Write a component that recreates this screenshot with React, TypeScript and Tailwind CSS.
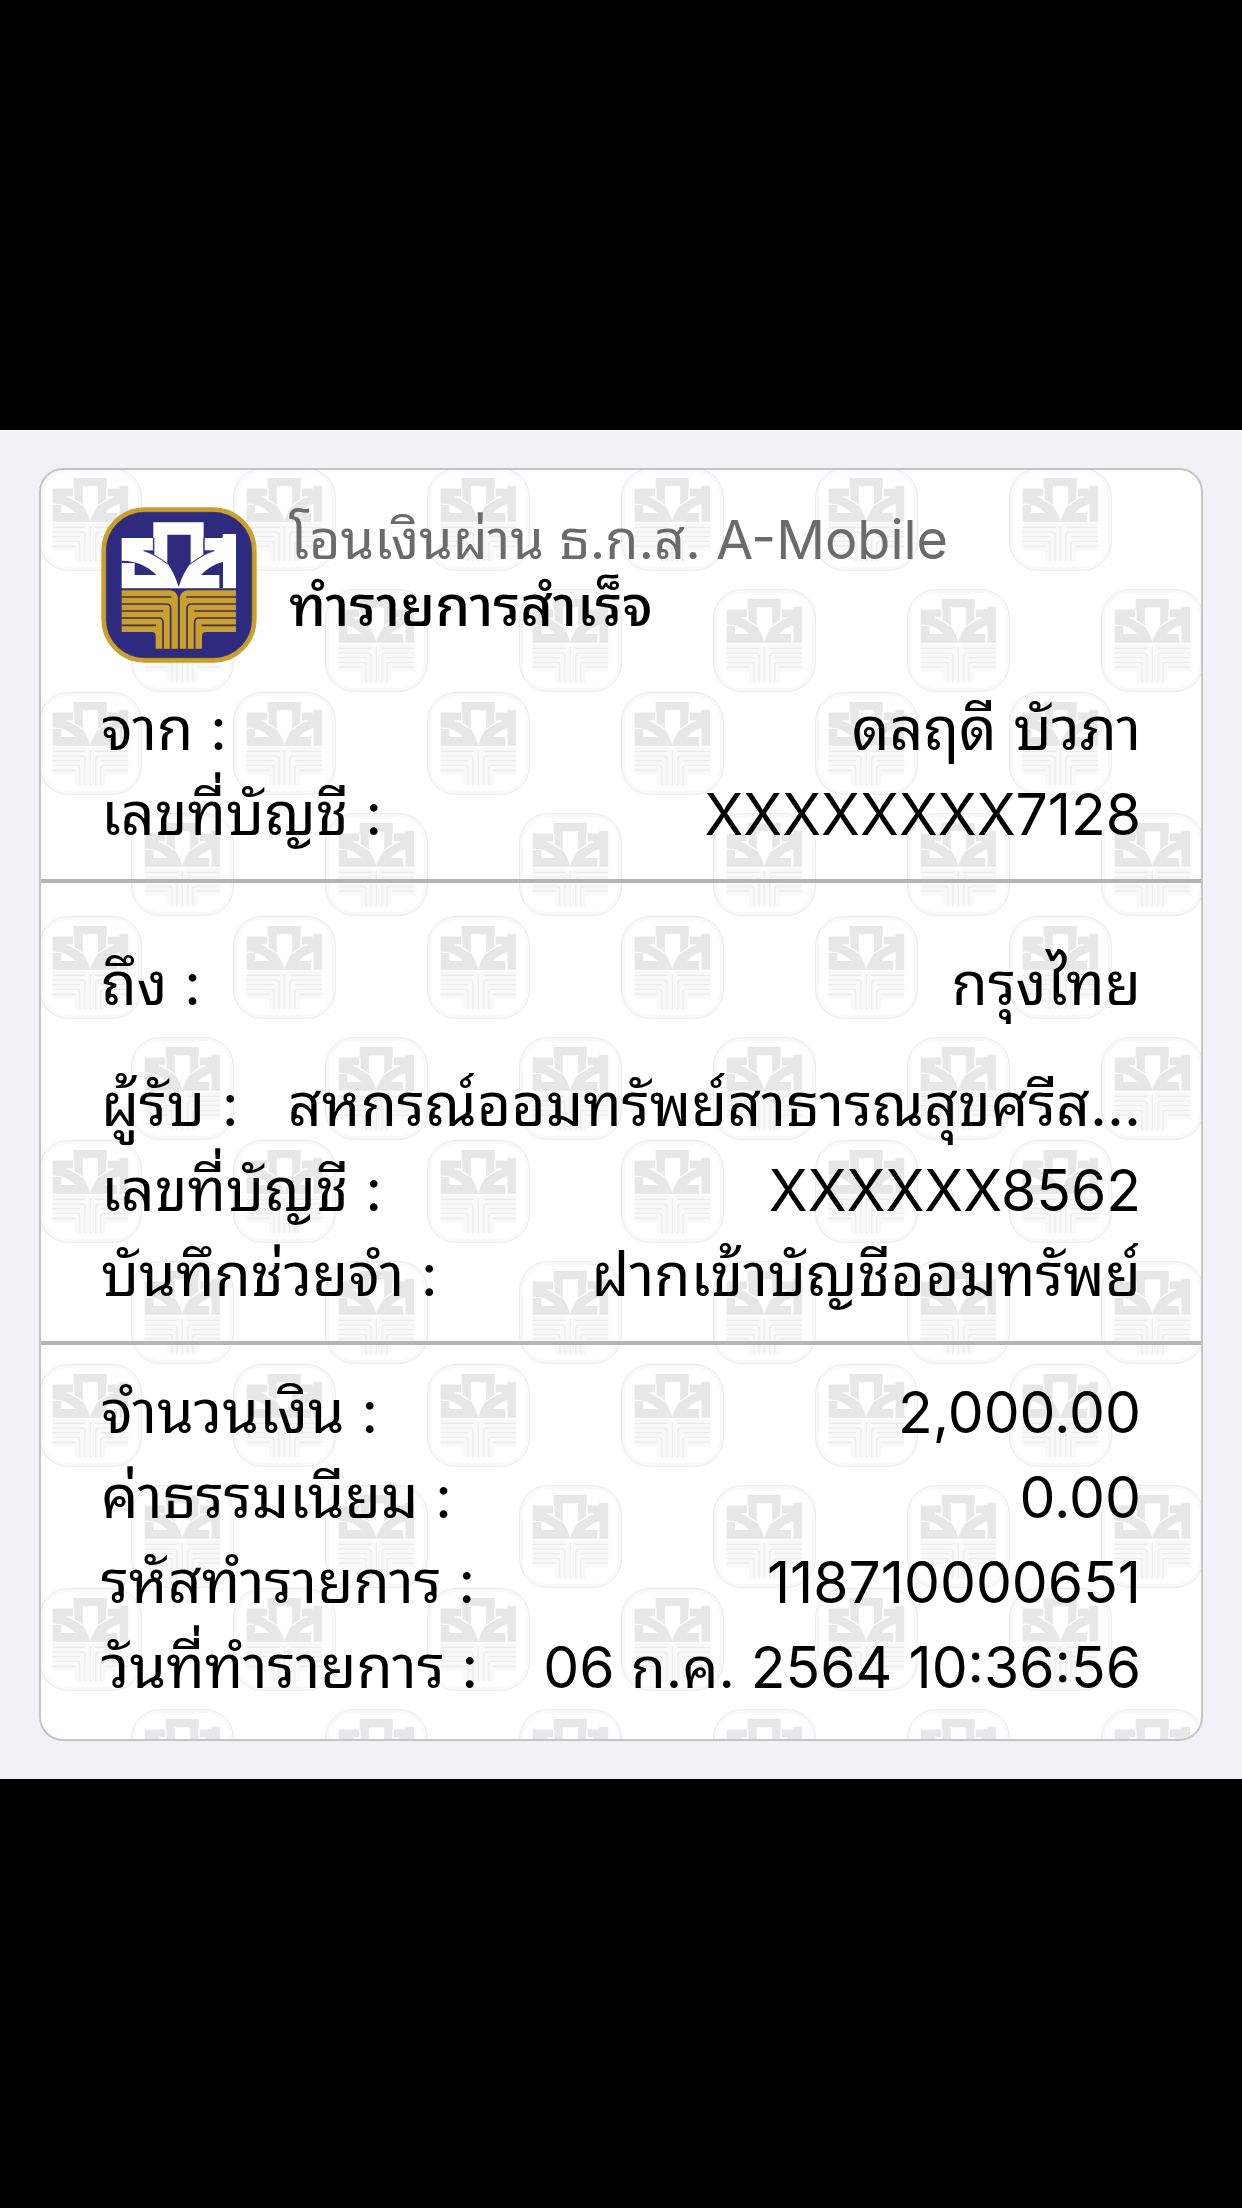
import React from 'react';

interface LogoProps {
  muted?: boolean;
}

interface RowProps {
  label: string;
  value: string;
  numeric?: boolean;
}

const LogoMark: React.FC<LogoProps> = ({ muted = false }) => {
  const ring = muted ? '#fafafa' : '#c9a02e';
  const field = muted ? '#ffffff' : '#2e2b7e';
  const letters = muted ? '#e7e7e7' : '#ffffff';
  const book = muted ? '#f9f9f9' : '#c9a02e';
  const lines = muted ? '#ebebeb' : '#3d3052';
  const gap = muted ? 5 : 2;

  const bookSide = (
    <>
      <path d="M124 297H270Q288 299 293 318V472H226V434Q226 422 214 422H124Z" fill={book} />
      <g fill="none" stroke={lines} strokeWidth="5">
        <path d="M124 317H273" />
        <path d="M124 338H258Q271 338 271 352V472" />
        <path d="M124 359H249" />
        <path d="M124 380H236Q248 380 248 394V472" />
        <path d="M124 402H227" />
      </g>
    </>
  );

  return (
    <g>
      <rect x="65" y="50" width="462" height="462" rx="128" fill={ring} stroke={muted ? '#e6e6e6' : ring} strokeWidth="4" />
      <rect x="78" y="63" width="436" height="436" rx="114" fill={field} stroke={muted ? '#f2f2f2' : field} strokeWidth="2" />
      {/* Letters */}
      <path d="M124 140H219V93H370V140H427V128H467V291H124Z" fill={letters} />
      <path d="M261 130H331V216Q308 245 295 287Q282 245 261 216Z" fill={field} />
      <path d="M190 178H219V140H221V192Q245 203 262 218Q228 190 190 178Z" fill={field} stroke={field} strokeWidth={gap} />
      <path d="M402 178H372V140H370V192Q347 203 330 218Q363 190 402 178Z" fill={field} stroke={field} strokeWidth={gap} />
      <path d="M124 208Q186 208 228 251H163V215H124Z" fill={field} />
      <path d="M428 211Q388 222 362 251H417V291H428Z" fill={field} />
      {/* Open book */}
      {bookSide}
      <g transform="translate(591 0) scale(-1 1)">{bookSide}</g>
      <path d="M295 310V472" stroke={lines} strokeWidth="5" />
    </g>
  );
};

const Watermark = () => (
  <svg className="pointer-events-none absolute inset-0 h-full w-full" aria-hidden="true">
    <defs>
      <symbol id="mark" viewBox="62 47 468 468">
        <LogoMark muted />
      </symbol>
      <pattern id="marks" x="-2" y="-2" width="194" height="224" patternUnits="userSpaceOnUse">
        <use href="#mark" x="0" y="0" width="103" height="103" />
        <use href="#mark" x="92" y="121" width="103" height="103" />
        <use href="#mark" x="-102" y="121" width="103" height="103" />
      </pattern>
    </defs>
    <rect width="100%" height="100%" fill="url(#marks)" />
  </svg>
);

const Row: React.FC<RowProps> = ({ label, value, numeric = false }) => (
  <div className="flex h-[85px] items-baseline justify-between leading-[85px] whitespace-nowrap">
    <dt>{label}</dt>
    <dd className={numeric ? 'text-[57px]' : ''}>{value}</dd>
  </div>
);

const App = () => {
  return (
    <main className="flex min-h-screen items-center bg-black font-['Inter','Noto_Sans_Thai_Looped','Noto_Sans_Thai',sans-serif] text-[59px] text-black">
      <div className="w-full bg-[#f2f1f8] px-[39px] py-[38px]">
        <article className="relative overflow-hidden rounded-3xl border-2 border-[#c4c4c8] bg-white">
          <Watermark />

          <div className="relative divide-y-4 divide-[#b5b5b5]">
            <section className="px-15 pt-[37px] pb-[23px]">
              <header className="flex gap-8 pb-[23px]">
                <svg className="size-[156px] shrink-0" viewBox="62 47 468 468" role="img" aria-label="ธ.ก.ส.">
                  <LogoMark />
                </svg>
                <div className="leading-[66px] whitespace-nowrap">
                  <p className="text-[54px] text-[#6b6b6b]">โอนเงินผ่าน ธ.ก.ส. A-Mobile</p>
                  <h1 className="text-[56px] font-medium">ทำรายการสำเร็จ</h1>
                </div>
              </header>
              <dl>
                <Row label="จาก :" value="ดลฤดี บัวภา" />
                <Row label="เลขที่บัญชี :" value="XXXXXXXX7128" numeric />
              </dl>
            </section>

            <section className="px-15 pt-[58px] pb-6">
              <dl>
                <div className="pb-9">
                  <Row label="ถึง :" value="กรุงไทย" />
                </div>
                <Row label="ผู้รับ :" value="สหกรณ์ออมทรัพย์สาธารณสุขศรีส..." />
                <Row label="เลขที่บัญชี :" value="XXXXXX8562" numeric />
                <Row label="บันทึกช่วยจำ :" value="ฝากเข้าบัญชีออมทรัพย์" />
              </dl>
            </section>

            <section className="px-15 pt-6 pb-[30px]">
              <dl>
                <Row label="จำนวนเงิน :" value="2,000.00" numeric />
                <Row label="ค่าธรรมเนียม :" value="0.00" numeric />
                <Row label="รหัสทำรายการ :" value="118710000651" numeric />
                <Row label="วันที่ทำรายการ :" value="06 ก.ค. 2564 10:36:56" numeric />
              </dl>
            </section>
          </div>
        </article>
      </div>
    </main>
  );
};

export default App;
